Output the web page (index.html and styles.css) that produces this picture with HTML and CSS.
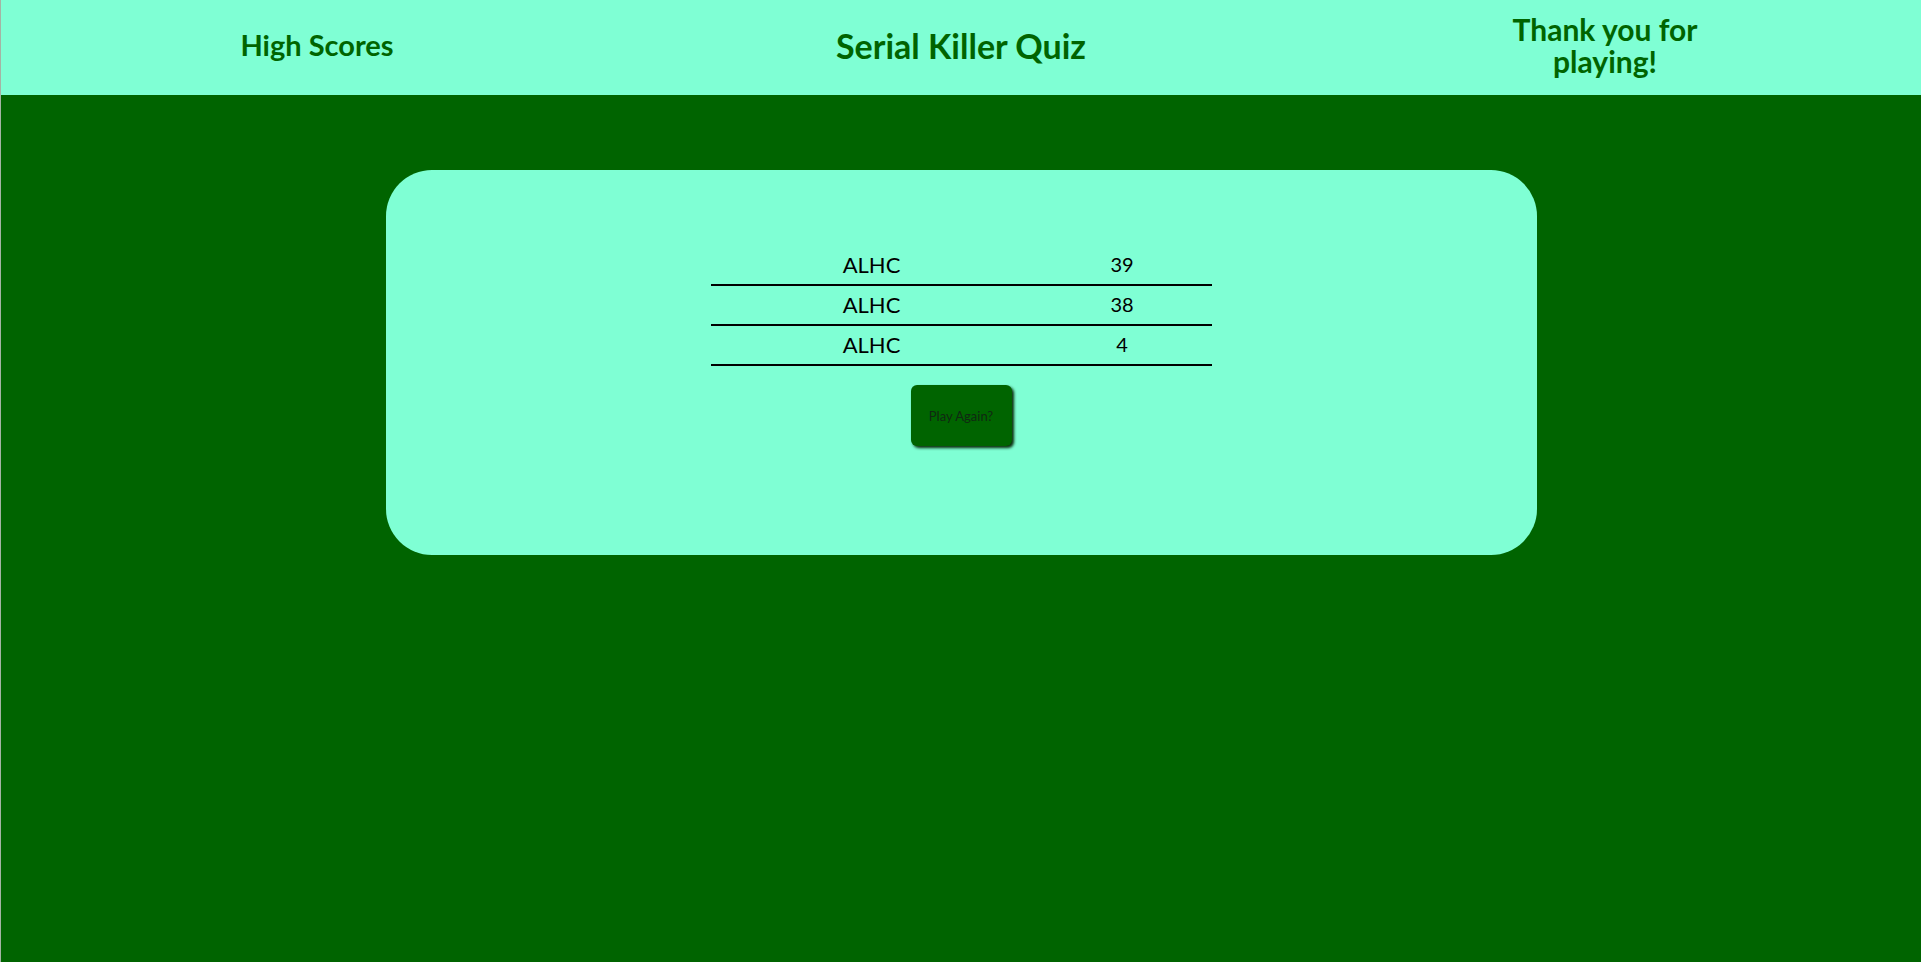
FILE: index.html
```html
<!DOCTYPE html>
<html lang="en">
<head>
<meta charset="utf-8">
<title>Serial Killer Quiz</title>
<link rel="stylesheet" href="styles.css">
</head>
<body>
<header class="topbar">
  <h2 class="side-title">High Scores</h2>
  <h1 class="main-title">Serial Killer Quiz</h1>
  <h2 class="side-title thanks">Thank you for playing!</h2>
</header>
<main class="card">
  <div class="scores">
    <div class="row"><span class="name">ALHC</span><span class="score">39</span></div>
    <div class="row"><span class="name">ALHC</span><span class="score">38</span></div>
    <div class="row"><span class="name">ALHC</span><span class="score">4</span></div>
  </div>
  <button class="again">Play Again?</button>
</main>
</body>
</html>
```
FILE: styles.css
```css
html, body {
  margin: 0;
  padding: 0;
}
body {
  background: #006400;
  min-height: 962px;
  border-left: 1px solid #a4b4a4;
  font-family: "Lato", "Open Sans", sans-serif;
}
.topbar {
  display: grid;
  grid-template-columns: 632px 1fr 632px;
  align-items: center;
  justify-items: center;
  height: 95px;
  box-sizing: border-box;
  padding-bottom: 5px;
  background: #7fffd4;
  color: #006400;
}
.side-title {
  margin: 0;
  font-size: 29px;
  font-weight: 700;
  text-align: center;
  line-height: 32px;
}
.thanks {
  width: 210px;
  font-size: 30px;
}
.main-title {
  margin: 0;
  font-size: 34px;
  font-weight: 700;
  text-align: center;
}
.card {
  width: 1151px;
  height: 385px;
  box-sizing: border-box;
  margin: 75px auto 0;
  padding-top: 76px;
  background: #7fffd4;
  border-radius: 46px;
  display: flex;
  flex-direction: column;
  align-items: center;
}
.scores {
  width: 501px;
}
.row {
  display: grid;
  grid-template-columns: 322px 179px;
  height: 40px;
  box-sizing: border-box;
  padding-bottom: 2px;
  border-bottom: 2px solid #000;
  align-items: center;
  justify-items: center;
  color: #000;
}
.name {
  font-size: 22px;
}
.score {
  font-size: 20px;
}
.again {
  margin-top: 19px;
  width: 101px;
  height: 61px;
  background: #006400;
  border: none;
  border-radius: 6px;
  box-shadow: 2px 2px 3px #0a2a0a;
  color: #102812;
  font-family: "Lato", "Open Sans", sans-serif;
  font-size: 13px;
  padding: 0;
}
```
